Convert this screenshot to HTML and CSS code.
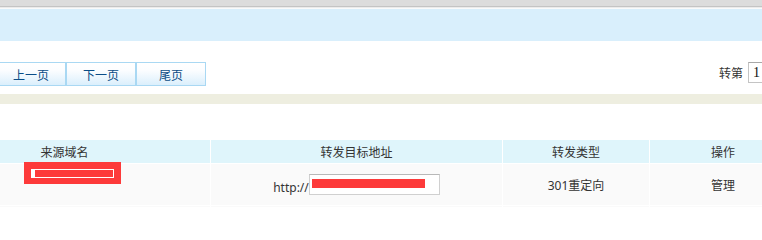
FILE: index.html
```html
<!DOCTYPE html>
<html lang="zh-CN">
<head>
<meta charset="utf-8">
<title>域名转发</title>
<link rel="stylesheet" href="styles.css">
</head>
<body>
<div class="page">
  <div class="topbar"></div>
  <div class="topline"></div>
  <div class="banner"></div>
  <div class="pager">
    <div class="pages">
      <span class="pbtn">上一页</span>
      <span class="pbtn">下一页</span>
      <span class="pbtn">尾页</span>
    </div>
    <div class="jump">
      <span class="jump-label">转第</span>
      <span class="jump-input">1</span>
    </div>
  </div>
  <div class="band"></div>
  <div class="spacer"></div>
  <table class="list">
    <colgroup>
      <col class="c1"><col class="c2"><col class="c3"><col class="c4">
    </colgroup>
    <thead>
      <tr><th>来源域名</th><th>转发目标地址</th><th>转发类型</th><th>操作</th></tr>
    </thead>
    <tbody>
      <tr>
        <td class="src"><div class="redact"><div class="redact-field"></div></div></td>
        <td>http://<span class="urlbox"><span class="urlredact"></span></span></td>
        <td>301重定向</td>
        <td>管理</td>
      </tr>
      <tr class="next">
        <td></td><td></td><td></td><td></td>
      </tr>
    </tbody>
  </table>
</div>
</body>
</html>
```

FILE: styles.css
```css
html, body {
  margin: 0;
  padding: 0;
  overflow: hidden;
  background: #fff;
  height: 207px;
}

body {
  font-family: "Noto Sans", "Noto Sans CJK SC", sans-serif;
  font-size: 12px;
  color: #333;
}

.page {
  width: 762px;
  height: 207px;
  overflow: hidden;
}

.topbar {
  height: 6px;
  background: #dcdcdc;
  border-bottom: 1px solid #c4c4c4;
}

.topline {
  height: 1px;
  background: #ebebeb;
  border-bottom: 1px solid #fafafa;
}

.banner {
  height: 32px;
  background: #d9effc;
}

.pager {
  height: 53px;
  box-sizing: border-box;
  padding-top: 21px;
  display: flex;
  justify-content: space-between;
  align-items: flex-start;
}

.pages {
  display: flex;
  margin-left: -4px;
}

.pbtn {
  width: 70px;
  height: 24px;
  box-sizing: border-box;
  border: 1px solid #a9d8f3;
  background: linear-gradient(#ffffff 0%, #fbfdff 35%, #dbeffc 100%);
  color: #0b4d86;
  font-family: "Noto Sans CJK SC", sans-serif;
  font-size: 12px;
  display: flex;
  align-items: center;
  justify-content: center;
}

.jump {
  display: flex;
  align-items: center;
  gap: 5px;
  margin-right: -26px;
}

.jump-label {
  font-family: "Noto Sans CJK SC", sans-serif;
  color: #333;
  width: 24px;
}

.jump-input {
  width: 40px;
  height: 21px;
  box-sizing: border-box;
  border: 1px solid #c4c4c4;
  border-top-color: #a8a8a8;
  background: #fff;
  font-family: "Liberation Serif", serif;
  font-size: 14px;
  line-height: 19px;
  padding-left: 4px;
  color: #111;
}

.band {
  height: 10px;
  background: #eeeee0;
}

.spacer {
  height: 35px;
}

.list {
  border-collapse: separate;
  border-spacing: 1px;
  table-layout: fixed;
  margin-left: -82px;
  width: 879px;
}

.c1 { width: 291px; }
.c2 { width: 291px; }
.c3 { width: 146px; }
.c4 { width: 146px; }

.list th {
  height: 23px;
  padding: 0;
  background: #dff5fb;
  font-family: "Noto Sans CJK SC", sans-serif;
  font-weight: normal;
  font-size: 12px;
  color: #333;
  text-align: center;
  vertical-align: middle;
}

.list td {
  height: 41px;
  padding: 0;
  background: #fafafa;
  text-align: center;
  vertical-align: middle;
  white-space: nowrap;
}

.list td.src {
  vertical-align: top;
  text-align: left;
}

.redact {
  width: 97px;
  height: 22px;
  margin: -2px 0 0 105px;
  background: #fd3a3a;
  padding: 7px 0 0 7px;
  box-sizing: border-box;
}

.redact-field {
  width: 83px;
  height: 9px;
  box-sizing: border-box;
  border: 1px solid #fff;
  border-left-width: 4px;
}

.urlbox {
  display: inline-block;
  width: 131px;
  height: 21px;
  box-sizing: border-box;
  border: 1px solid #d0d0d0;
  border-top-color: #b8b8b8;
  background: #fff;
  vertical-align: -3px;
  padding: 4px 0 0 2px;
  text-align: left;
}

.urlredact {
  display: block;
  width: 113px;
  height: 9px;
  background: #fd3a3a;
}

.list tr.next td {
  height: 20px;
}
```
